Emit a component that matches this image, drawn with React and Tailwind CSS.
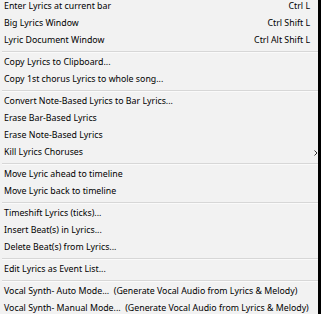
import React from "react";

const items = [
  { label: "Enter Lyrics at current bar", key: "Ctrl L" },
  { label: "Big Lyrics Window", key: "Ctrl Shift L" },
  { label: "Lyric Document Window", key: "Ctrl Alt Shift L" },
  "sep",
  { label: "Copy Lyrics to Clipboard..." },
  { label: "Copy 1st chorus Lyrics to whole song..." },
  "sep",
  { label: "Convert Note-Based Lyrics to Bar Lyrics..." },
  { label: "Erase Bar-Based Lyrics" },
  { label: "Erase Note-Based Lyrics" },
  { label: "Kill Lyrics Choruses", sub: true },
  "sep",
  { label: "Move Lyric ahead to timeline" },
  { label: "Move Lyric back to timeline" },
  "sep",
  { label: "Timeshift Lyrics (ticks)..." },
  { label: "Insert Beat(s) in Lyrics..." },
  { label: "Delete Beat(s) from Lyrics..." },
  "sep",
  { label: "Edit Lyrics as Event List..." },
  "sep",
  { label: "Vocal Synth- Auto Mode...  (Generate Vocal Audio from Lyrics & Melody)" },
  { label: "Vocal Synth- Manual Mode...  (Generate Vocal Audio from Lyrics & Melody)" },
];

export default function App() {
  return (
    <div className="w-[321px] h-[314px] overflow-hidden bg-[#f2f2f2] border-r-[3px] border-black font-['Noto_Sans',sans-serif] text-[8.8px] text-black">
      <div className="flex flex-col mt-[-2px]">
        {items.map((it, i) =>
          it === "sep" ? (
            <div key={i} className="h-[5px] flex flex-col justify-center pl-[2px]">
              <div className="h-px bg-[#d7d7d7]" />
              <div className="h-px bg-[#fafafa]" />
            </div>
          ) : (
            <div key={i} className="h-[17px] flex items-center justify-between pl-[4px] pr-[8px] relative">
              <span className="whitespace-pre">{it.label}</span>
              {it.key && <span className="whitespace-pre">{it.key}</span>}
              {it.sub && (
                <svg className="absolute right-0 top-[6px]" width="4" height="6" viewBox="0 0 4 6">
                  <path d="M0.5 0.5 L3 3 L0.5 5.5" fill="none" stroke="#333" strokeWidth="1" />
                </svg>
              )}
            </div>
          )
        )}
      </div>
    </div>
  );
}
